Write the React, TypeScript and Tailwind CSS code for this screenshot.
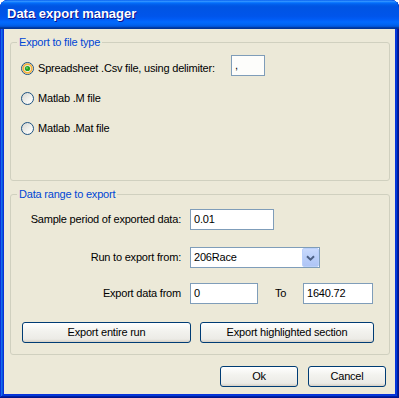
import React from "react";

function Radio({ checked }: { checked?: boolean }) {
  return (
    <svg width="13" height="13" viewBox="0 0 13 13" className="shrink-0">
      <defs>
        <linearGradient id="radioFill" x1="0" y1="0" x2="1" y2="1">
          <stop offset="0" stopColor="#D4D4CE" />
          <stop offset="0.6" stopColor="#F4F4F0" />
          <stop offset="1" stopColor="#FFFFFF" />
        </linearGradient>
      </defs>
      <circle cx="6.5" cy="6.5" r="6" fill="url(#radioFill)" stroke="#1C5180" strokeWidth="1" />
      {checked && (
        <>
          <circle cx="6.5" cy="6.5" r="4.3" fill="none" stroke="#F5B13C" strokeWidth="1.8" />
          <circle cx="6.5" cy="6.5" r="2.6" fill="#21A121" />
          <circle cx="6" cy="6" r="0.9" fill="#6FD26F" />
        </>
      )}
    </svg>
  );
}

function TextBox({ value, w }: { value: string; w: string }) {
  return (
    <div
      className={`${w} h-[21px] shrink-0 border border-[#7F9DB9] bg-white flex items-center pl-[3px] leading-none`}
    >
      {value}
    </div>
  );
}

function XPButton({ label, w }: { label: string; w: string }) {
  return (
    <div
      className={`${w} h-[21px] shrink-0 rounded-[3px] border border-[#003C74] bg-[linear-gradient(180deg,#FFFFFF_0%,#F3F3EF_40%,#ECEBE6_85%,#D6D0C5_100%)] flex items-center justify-center leading-none`}
    >
      {label}
    </div>
  );
}

export default function App() {
  return (
    <div className="w-[399px] h-[398px] bg-white font-['Liberation_Sans',Arial,sans-serif] text-[11px] tracking-[-0.2px] text-black">
      <div className="w-[399px] h-[398px] flex flex-col rounded-t-[8px] overflow-hidden bg-[#0831D9] shadow-[inset_-1px_-1px_#00138c,inset_1px_1px_#0831d9,inset_-2px_-2px_#001ea0,inset_2px_2px_#166aee,inset_-3px_-3px_#003bda,inset_3px_3px_#0855dd]">
        {/* Title bar */}
        <div className="h-[29px] shrink-0 flex items-center pl-[7px] pb-[1px] bg-[linear-gradient(180deg,#0058EE_0%,#3593FF_4%,#288EFF_6%,#127DFF_8%,#036FFC_10%,#0262EE_14%,#0057E5_20%,#0054E3_24%,#0055EB_56%,#005BF5_66%,#026AFE_76%,#0062EF_86%,#0052D6_92%,#0040AB_94%,#003092_100%)]">
          <span className="text-white font-bold text-[13px] tracking-normal [text-shadow:1px_1px_#0F1089]">
            Data export manager
          </span>
        </div>

        {/* Client area */}
        <div className="flex-1 mx-[4px] mb-[4px] bg-[#ECE9D8] flex flex-col pl-[6px] pr-[5px]">
          {/* Group 1 */}
          <fieldset className="mt-[7px] border border-[#D0D0BF] rounded-[3px]">
            <legend className="ml-[6px] px-[2px] leading-[13px] text-[#0046D5]">Export to file type</legend>
            <div className="h-[131px] flex flex-col pt-[9px] pl-[10px] gap-[10px]">
              <div className="h-[20px] flex items-center">
                <Radio checked />
                <span className="ml-[4px] w-[193px] shrink-0">Spreadsheet .Csv file, using delimiter:</span>
                <div className="-mt-[5px] w-[34px] h-[21px] shrink-0 border border-[#7F9DB9] bg-[#FDFDFB] flex items-center pl-[3px] leading-none">
                  ,
                </div>
              </div>
              <div className="h-[20px] flex items-center">
                <Radio />
                <span className="ml-[4px]">Matlab .M file</span>
              </div>
              <div className="h-[20px] flex items-center">
                <Radio />
                <span className="ml-[4px]">Matlab .Mat file</span>
              </div>
            </div>
          </fieldset>

          {/* Group 2 */}
          <fieldset className="mt-[7px] border border-[#D0D0BF] rounded-[3px]">
            <legend className="ml-[6px] px-[2px] leading-[13px] text-[#0046D5]">Data range to export</legend>
            <div className="h-[153px] flex flex-col pt-[8px]">
              <div className="h-[21px] flex items-center">
                <span className="w-[170px] shrink-0 text-right">Sample period of exported data:</span>
                <div className="ml-[9px]">
                  <TextBox value="0.01" w="w-[84px]" />
                </div>
              </div>
              <div className="mt-[17px] h-[21px] flex items-center">
                <span className="w-[170px] shrink-0 text-right">Run to export from:</span>
                <div className="ml-[9px] w-[130px] h-[21px] border border-[#7F9DB9] bg-white flex items-center">
                  <span className="flex-1 pl-[3px] leading-none">206Race</span>
                  <div className="w-[17px] h-[19px] mr-0 rounded-[2px] border border-[#BAD0FB] bg-[linear-gradient(180deg,#C9DAFD_0%,#B9CEF9_50%,#AFC5F6_100%)] flex items-center justify-center">
                    <svg width="9" height="6" viewBox="0 0 9 6">
                      <path d="M1 1.2 L4.5 4.6 L8 1.2" fill="none" stroke="#4D6185" strokeWidth="2" />
                    </svg>
                  </div>
                </div>
              </div>
              <div className="mt-[15px] h-[21px] flex items-center">
                <span className="w-[170px] shrink-0 text-right">Export data from</span>
                <div className="ml-[9px]">
                  <TextBox value="0" w="w-[68px]" />
                </div>
                <span className="w-[45px] shrink-0 pl-[17px]">To</span>
                <TextBox value="1640.72" w="w-[70px]" />
              </div>
              <div className="mt-[18px] flex items-center pl-[11px]">
                <XPButton label="Export entire run" w="w-[169px]" />
                <div className="ml-[9px]">
                  <XPButton label="Export highlighted section" w="w-[174px]" />
                </div>
              </div>
            </div>
          </fieldset>

          {/* Dialog buttons */}
          <div className="mt-[11px] flex justify-end gap-[10px] pr-[4px]">
            <XPButton label="Ok" w="w-[78px]" />
            <XPButton label="Cancel" w="w-[78px]" />
          </div>
        </div>
      </div>
    </div>
  );
}
